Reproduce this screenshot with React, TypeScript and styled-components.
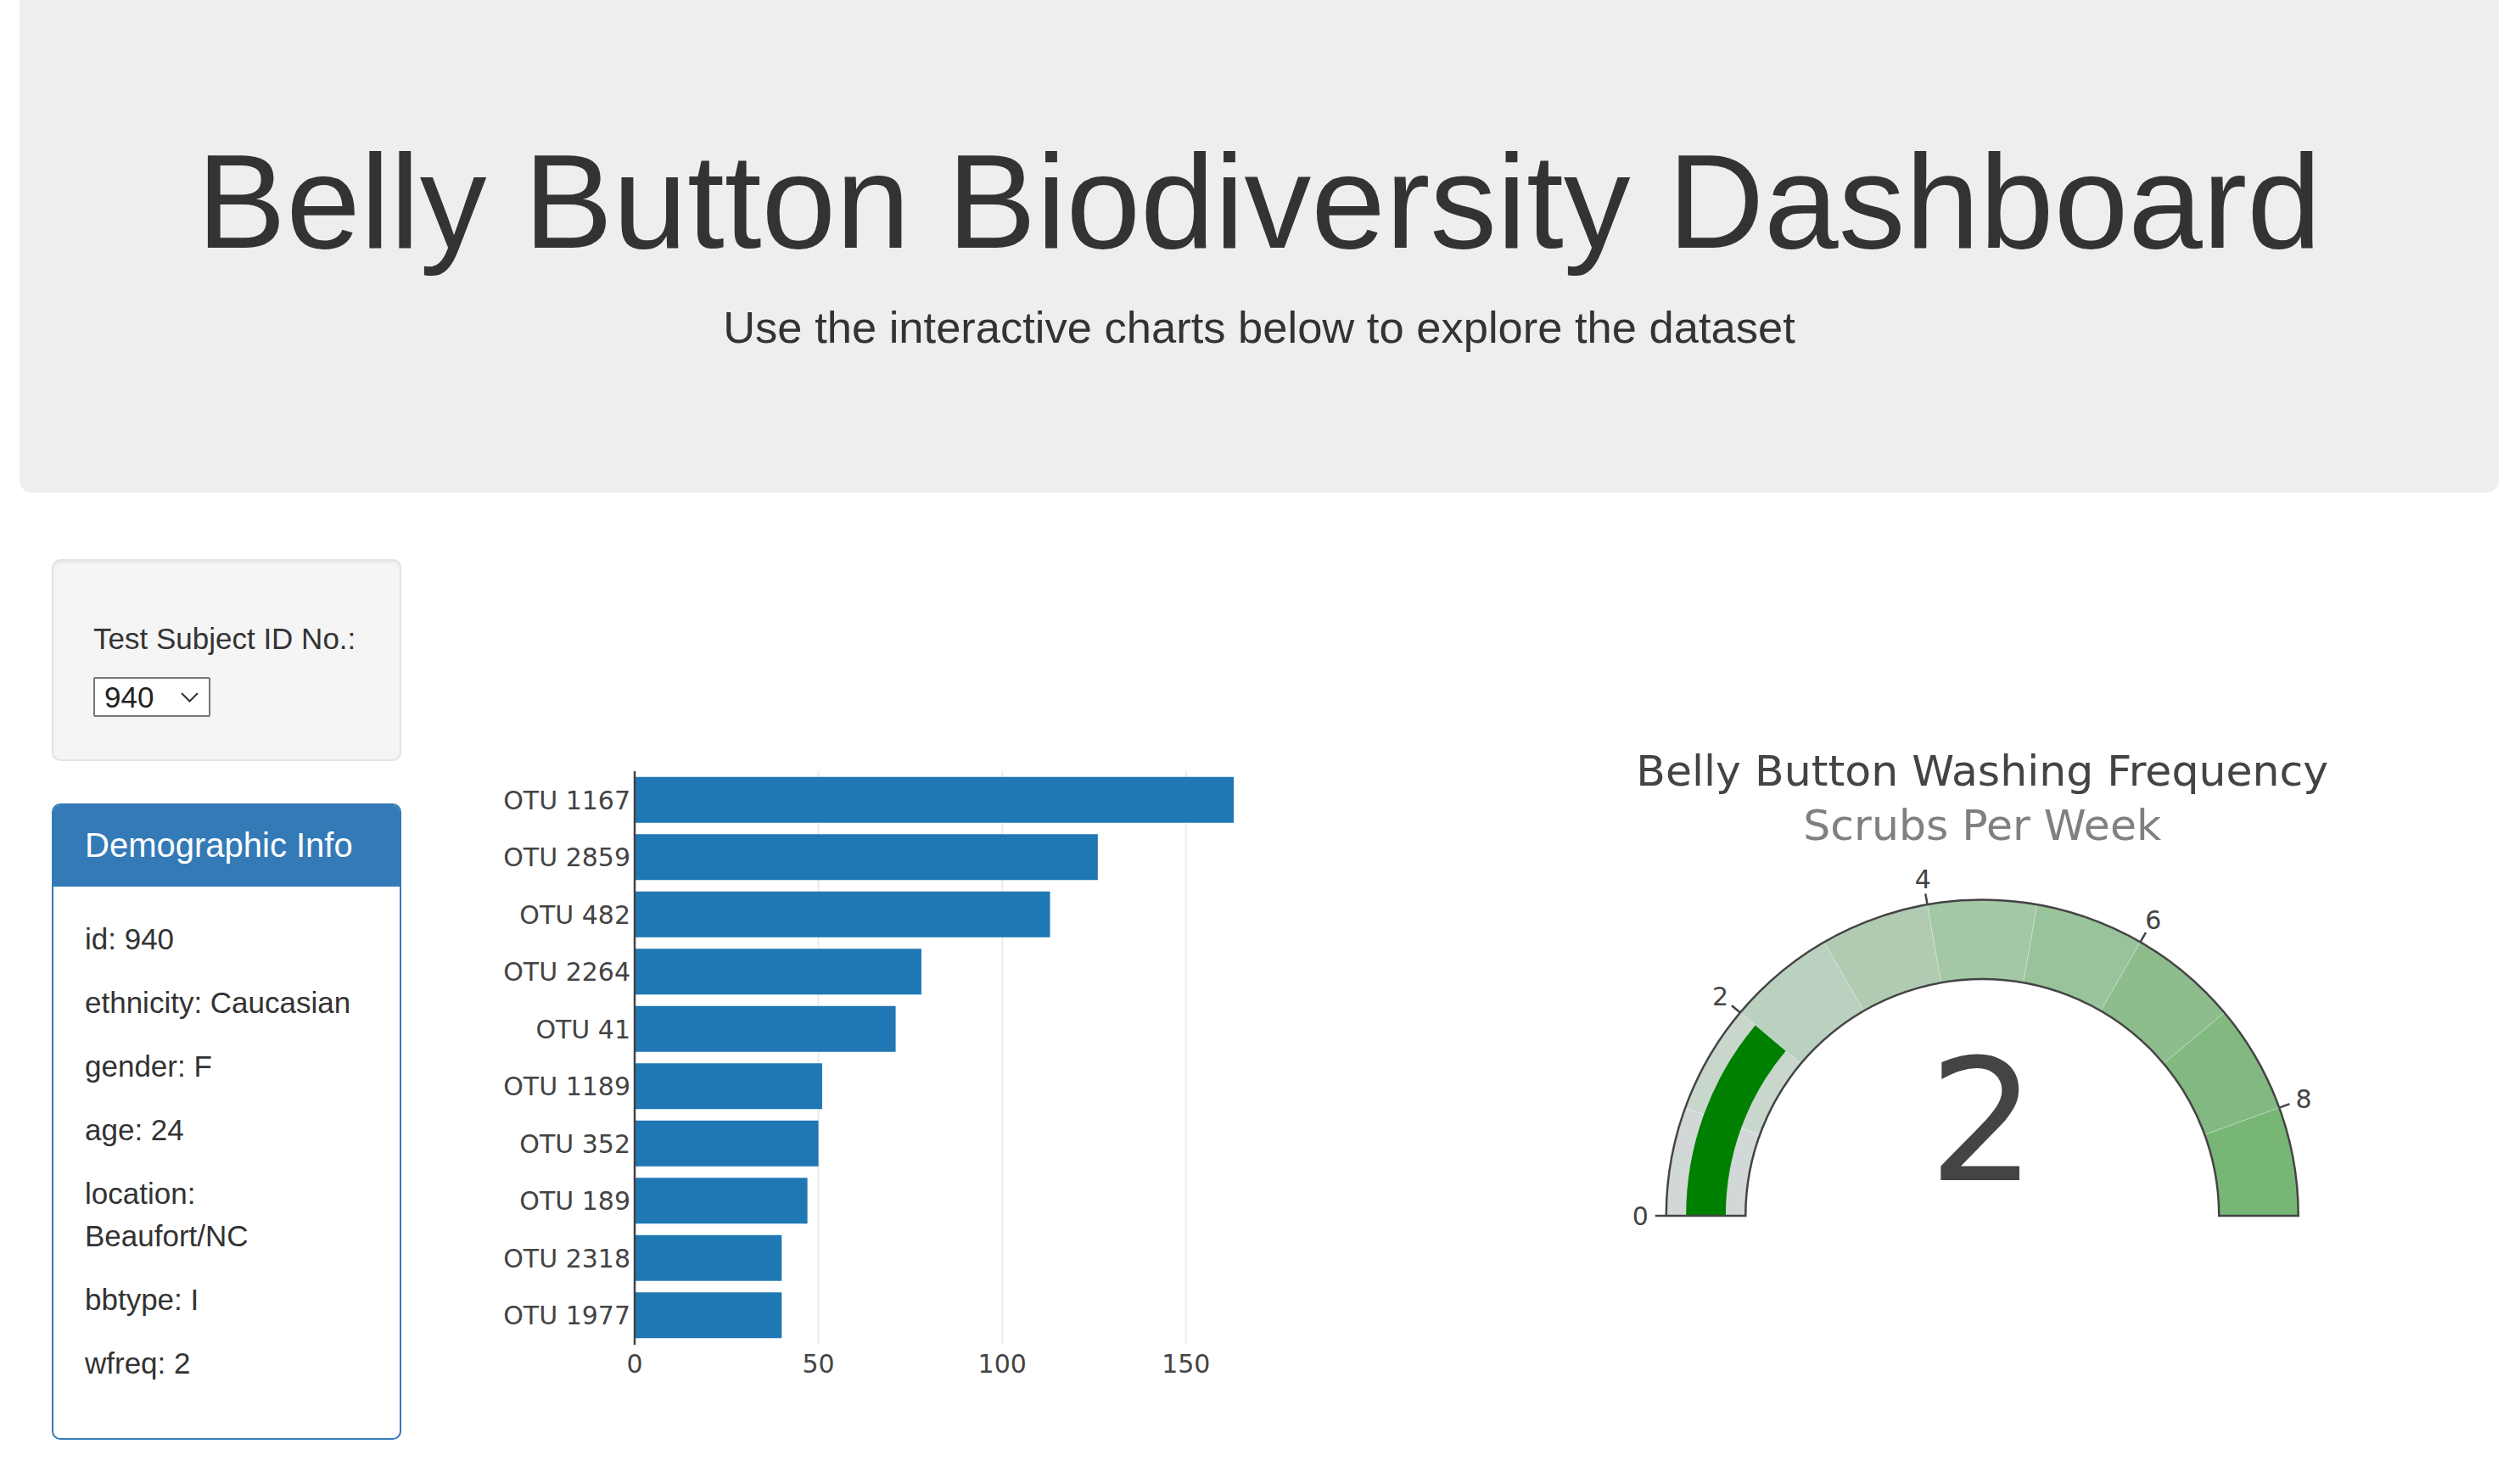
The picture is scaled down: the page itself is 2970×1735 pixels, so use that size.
import React from "react";
import styled, { createGlobalStyle } from "styled-components";

const GlobalStyle = createGlobalStyle`
  html, body {
    margin: 0;
    padding: 0;
    overflow: hidden;
    background: #fff;
  }
  body {
    font-family: "Liberation Sans", Arial, Helvetica, sans-serif;
    font-size: 35px;
    line-height: 1.42857;
    color: #333;
  }
  * {
    box-sizing: border-box;
  }
`;

const Page = styled.div`
  padding: 0 25px 0 23px;
`;

const Jumbotron = styled.header`
  background: #eee;
  border-radius: 0 0 15px 15px;
  padding: 100.5px 150px 120px;
  margin-bottom: 78px;
  text-align: center;
`;

const Title = styled.h1`
  margin: 50px 0 25px;
  font-size: 157.5px;
  line-height: 1.1;
  font-weight: 400;
  color: #333;
`;

const Lead = styled.p`
  margin: 0 0 37.5px;
  font-size: 52.5px;
  line-height: 1.42857;
`;

const Row = styled.main`
  display: grid;
  grid-template-columns: 2fr 5fr 5fr;
`;

const Column = styled.section`
  padding: 0 37.5px;
  min-width: 0;
`;

const Well = styled.div`
  background: #f5f5f5;
  border: 2.5px solid #e3e3e3;
  border-radius: 10px;
  padding: 47.5px;
  margin-bottom: 50px;
  box-shadow: inset 0 2.5px 2.5px rgba(0, 0, 0, 0.05);
`;

const FieldLabel = styled.h5`
  margin: 25px 0;
  font-size: 35px;
  line-height: 1.1;
  font-weight: 400;
  color: #333;
`;

const SelectWrap = styled.div`
  position: relative;
  display: inline-block;
`;

const Select = styled.select`
  appearance: none;
  -webkit-appearance: none;
  display: block;
  width: 138px;
  height: 47px;
  margin: 0;
  padding: 0 0 0 11px;
  border: 2px solid #767676;
  border-radius: 2px;
  background: #fff;
  color: #222;
  font-family: "Liberation Sans", Arial, sans-serif;
  font-size: 35px;
  line-height: 43px;
`;

const Chevron = styled.svg`
  position: absolute;
  top: 18px;
  right: 14px;
  width: 21px;
  height: 12px;
  pointer-events: none;
`;

const Panel = styled.div`
  border: 2.5px solid #337ab7;
  border-radius: 10px;
  margin-bottom: 50px;
  background: #fff;
`;

const PanelHeading = styled.div`
  background: #337ab7;
  color: #fff;
  padding: 25px 37.5px;
  border-bottom: 2.5px solid #337ab7;
  border-radius: 7.5px 7.5px 0 0;
`;

const PanelTitle = styled.h3`
  margin: 0;
  font-size: 40px;
  line-height: 1.1;
  font-weight: 400;
`;

const PanelBody = styled.div`
  padding: 37.5px 46px 37.5px 37.5px;
`;

const InfoLine = styled.p`
  margin: 0 0 25px;
`;

const ChartSvg = styled.svg`
  display: block;
  width: 100%;
  height: auto;
  font-family: "DejaVu Sans", Verdana, sans-serif;
`;

const AxisText = styled.text<{ $anchor: "start" | "middle" | "end" }>`
  font-size: 30px;
  fill: #444;
  text-anchor: ${(p) => p.$anchor};
`;

const GaugeTitle = styled.text<{ $muted?: boolean }>`
  font-size: 50.5px;
  fill: ${(p) => (p.$muted ? "#808080" : "#444")};
  text-anchor: middle;
`;

const GaugeNumber = styled.text`
  font-size: 200px;
  fill: #444;
  text-anchor: middle;
`;

const metadata = [
  "id: 940",
  "ethnicity: Caucasian",
  "gender: F",
  "age: 24",
  "location: Beaufort/NC",
  "bbtype: I",
  "wfreq: 2",
];

const otus = [
  { label: "OTU 1167", value: 163 },
  { label: "OTU 2859", value: 126 },
  { label: "OTU 482", value: 113 },
  { label: "OTU 2264", value: 78 },
  { label: "OTU 41", value: 71 },
  { label: "OTU 1189", value: 51 },
  { label: "OTU 352", value: 50 },
  { label: "OTU 189", value: 47 },
  { label: "OTU 2318", value: 40 },
  { label: "OTU 1977", value: 40 },
];

// plot area inside the 1142.5 x 1125 chart (plotly-ish margins at 2.5x)
const plot = { left: 200, top: 250, width: 742.5, height: 675 };
const xScale = plot.width / 171.4;

const BarChart = () => {
  const pitch = plot.height / otus.length;
  const barH = pitch * 0.8;
  return (
    <ChartSvg viewBox="0 0 1142.5 1125">
      {[50, 100, 150].map((t) => (
        <line
          key={t}
          x1={plot.left + t * xScale}
          x2={plot.left + t * xScale}
          y1={plot.top}
          y2={plot.top + plot.height}
          stroke="#eee"
          strokeWidth={2.5}
        />
      ))}
      {otus.map((o, i) => {
        const y = plot.top + i * pitch + (pitch - barH) / 2;
        return (
          <g key={o.label}>
            <rect
              x={plot.left}
              y={y}
              width={o.value * xScale}
              height={barH}
              fill="#1f77b4"
            />
            <AxisText $anchor="end" x={plot.left - 5} y={y + barH / 2 + 11}>
              {o.label}
            </AxisText>
          </g>
        );
      })}
      <line
        x1={plot.left}
        x2={plot.left}
        y1={plot.top}
        y2={plot.top + plot.height + 1}
        stroke="#444"
        strokeWidth={2.5}
      />
      {[0, 50, 100, 150].map((t) => (
        <AxisText
          key={t}
          $anchor="middle"
          x={plot.left + t * xScale}
          y={plot.top + plot.height + 34}
        >
          {t}
        </AxisText>
      ))}
    </ChartSvg>
  );
};

const gauge = { cx: 571.25, cy: 774, R: 372.5, r: 279, max: 9 };

const steps = [
  "#d2d8d7",
  "#c8d6cc",
  "#bbd1bf",
  "#b0cbb2",
  "#a4c7a6",
  "#99c39b",
  "#8dbd8d",
  "#82b981",
  "#78b676",
];

const polar = (v: number, rad: number) => {
  const a = Math.PI * (1 - v / gauge.max);
  return [gauge.cx + rad * Math.cos(a), gauge.cy - rad * Math.sin(a)];
};

const band = (v1: number, v2: number, ro: number, ri: number) => {
  const [x1, y1] = polar(v1, ro);
  const [x2, y2] = polar(v2, ro);
  const [x3, y3] = polar(v2, ri);
  const [x4, y4] = polar(v1, ri);
  return `M${x1} ${y1} A${ro} ${ro} 0 0 1 ${x2} ${y2} L${x3} ${y3} A${ri} ${ri} 0 0 0 ${x4} ${y4} Z`;
};

const Gauge = ({ value }: { value: number }) => {
  const mid = (gauge.R + gauge.r) / 2;
  const half = (gauge.R - gauge.r) / 4;
  return (
    <ChartSvg viewBox="0 0 1142.5 1125">
      <GaugeTitle x={gauge.cx} y={267}>
        Belly Button Washing Frequency
      </GaugeTitle>
      <GaugeTitle $muted x={gauge.cx} y={330.5}>
        Scrubs Per Week
      </GaugeTitle>
      {steps.map((c, i) => (
        <path
          key={i}
          d={band(i, i + 1, gauge.R, gauge.r)}
          fill={c}
          stroke="rgba(255,255,255,0.25)"
          strokeWidth={1}
        />
      ))}
      <path d={band(0, value, mid + half, mid - half)} fill="#008000" />
      <path
        d={band(0, gauge.max, gauge.R, gauge.r)}
        fill="none"
        stroke="#444"
        strokeWidth={2.5}
      />
      {[0, 2, 4, 6, 8].map((t) => {
        const [x1, y1] = polar(t, gauge.R);
        const [x2, y2] = polar(t, gauge.R + 13);
        const [lx, ly] = polar(t, 403);
        return (
          <g key={t}>
            <line x1={x1} y1={y1} x2={x2} y2={y2} stroke="#444" strokeWidth={2.5} />
            <AxisText $anchor="middle" x={lx} y={ly + 11}>
              {t}
            </AxisText>
          </g>
        );
      })}
      <GaugeNumber x={gauge.cx} y={731.6}>
        {value}
      </GaugeNumber>
    </ChartSvg>
  );
};

const App = () => (
  <Page>
    <GlobalStyle />
    <Jumbotron>
      <Title>Belly Button Biodiversity Dashboard</Title>
      <Lead>Use the interactive charts below to explore the dataset</Lead>
    </Jumbotron>
    <Row>
      <Column>
        <Well>
          <FieldLabel>Test Subject ID No.:</FieldLabel>
          <SelectWrap>
            <Select id="selDataset" defaultValue="940">
              <option value="940">940</option>
              <option value="941">941</option>
              <option value="943">943</option>
            </Select>
            <Chevron viewBox="0 0 21 12">
              <polyline
                points="1,1 10.5,10.5 20,1"
                fill="none"
                stroke="#333"
                strokeWidth={2}
              />
            </Chevron>
          </SelectWrap>
        </Well>
        <Panel>
          <PanelHeading>
            <PanelTitle>Demographic Info</PanelTitle>
          </PanelHeading>
          <PanelBody>
            {metadata.map((m) => (
              <InfoLine key={m}>{m}</InfoLine>
            ))}
          </PanelBody>
        </Panel>
      </Column>
      <Column>
        <BarChart />
      </Column>
      <Column>
        <Gauge value={2} />
      </Column>
    </Row>
  </Page>
);

export default App;
